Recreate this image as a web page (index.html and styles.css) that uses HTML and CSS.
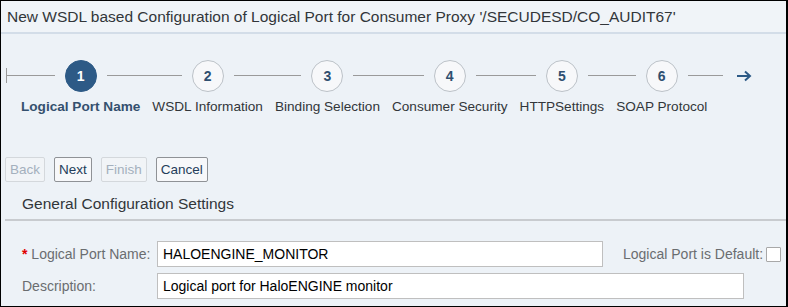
FILE: index.html
```html
<!DOCTYPE html>
<html>
<head>
<meta charset="utf-8">
<link rel="stylesheet" href="styles.css">
</head>
<body>
<div class="frame">
  <div class="titlebar">New WSDL based Configuration of Logical Port for Consumer Proxy '/SECUDESD/CO_AUDIT67'</div>

  <div class="steps">
    <span class="tick"></span>
    <span class="lead"></span>
    <div class="step">
      <div class="track"><span class="line"></span><span class="circle active">1</span><span class="line"></span></div>
      <div class="label active">Logical Port Name</div>
    </div>
    <div class="step">
      <div class="track"><span class="line"></span><span class="circle">2</span><span class="line"></span></div>
      <div class="label">WSDL Information</div>
    </div>
    <div class="step">
      <div class="track"><span class="line"></span><span class="circle">3</span><span class="line"></span></div>
      <div class="label">Binding Selection</div>
    </div>
    <div class="step">
      <div class="track"><span class="line"></span><span class="circle">4</span><span class="line"></span></div>
      <div class="label">Consumer Security</div>
    </div>
    <div class="step">
      <div class="track"><span class="line"></span><span class="circle">5</span><span class="line"></span></div>
      <div class="label">HTTPSettings</div>
    </div>
    <div class="step">
      <div class="track"><span class="line"></span><span class="circle">6</span><span class="line"></span></div>
      <div class="label">SOAP Protocol</div>
    </div>
    <span class="tail"></span>
    <svg class="arrow" width="16" height="12" viewBox="0 0 16 12">
      <path d="M1 6 H14 M9 1.5 L14 6 L9 10.5" fill="none" stroke="#2c5a86" stroke-width="2" stroke-linejoin="miter"/>
    </svg>
  </div>

  <div class="buttons">
    <button class="btn disabled">Back</button>
    <button class="btn">Next</button>
    <button class="btn disabled">Finish</button>
    <button class="btn">Cancel</button>
  </div>

  <div class="section">General Configuration Settings</div>

  <div class="form">
    <div class="row">
      <label class="flabel"><span class="req">*</span> Logical Port Name:</label>
      <div class="input w1">HALOENGINE_MONITOR</div>
      <span class="cblabel">Logical Port is Default:</span>
      <span class="checkbox"></span>
    </div>
    <div class="row">
      <label class="flabel">Description:</label>
      <div class="input w2">Logical port for HaloENGINE monitor</div>
    </div>
  </div>
</div>
</body>
</html>
```

FILE: styles.css
```css
html, body {
  margin: 0;
  padding: 0;
  background: #edf2f7;
}

.frame {
  width: 788px;
  height: 307px;
  box-sizing: border-box;
  border: 1px solid #000;
  border-right-width: 2px;
  background: #edf2f7;
  font-family: "Liberation Sans", Arial, sans-serif;
  color: #32363a;
  overflow: hidden;
}

.titlebar {
  height: 31px;
  line-height: 31px;
  padding-left: 6px;
  font-size: 15.5px;
  color: #32363a;
  background: #f0f4f8;
  border-bottom: 2px solid #d3dde8;
  white-space: nowrap;
}

.steps {
  display: flex;
  align-items: flex-start;
  padding-top: 26px;
  padding-left: 5px;
  height: 90px;
  box-sizing: border-box;
}

.tick {
  width: 1px;
  height: 15px;
  margin-top: 8px;
  background: #9a9a9a;
}

.lead {
  width: 8px;
  height: 1px;
  margin-top: 15px;
  background: #9a9a9a;
}

.tail {
  width: 11px;
  height: 1px;
  margin-top: 15px;
  margin-left: -1px;
  background: #9a9a9a;
}

.arrow {
  margin-left: 13px;
  margin-top: 10px;
}

.step {
  display: flex;
  flex-direction: column;
  align-items: stretch;
}

.track {
  display: flex;
  align-items: flex-start;
  height: 32px;
}

.line {
  flex: 1;
  height: 1px;
  margin-top: 15px;
  background: #9a9a9a;
}

.circle {
  width: 30px;
  height: 30px;
  margin: 0 10px;
  border: 1px solid #bcc2c8;
  border-radius: 50%;
  background: #f7f8fa;
  color: #2f4f70;
  font-weight: bold;
  font-size: 14px;
  display: flex;
  align-items: center;
  justify-content: center;
}

.circle.active {
  background: #2d5a86;
  border-color: #2d5a86;
  color: #fff;
}

.label {
  margin-top: 6px;
  padding: 0 6px;
  font-size: 13.6px;
  line-height: 18px;
  text-align: center;
  white-space: nowrap;
  color: #32363a;
}

.label.active {
  font-weight: bold;
  color: #34506e;
}

.buttons {
  display: flex;
  gap: 9px;
  padding-left: 4px;
  margin-top: 33px;
  height: 25px;
}

.btn {
  height: 25px;
  padding: 0 4px;
  margin: 0;
  font-family: "Liberation Sans", Arial, sans-serif;
  font-size: 13.5px;
  color: #253e5a;
  background: #f7f8fa;
  border: 1px solid #8f9296;
  border-radius: 2px;
}

.btn.disabled {
  color: #a4b0bd;
  border-color: #d4d8dc;
  background: #f1f4f7;
}

.section {
  margin-top: 8px;
  margin-left: 4px;
  padding-left: 17px;
  padding-bottom: 1px;
  height: 28px;
  line-height: 28px;
  font-size: 15.5px;
  color: #32363a;
  border-bottom: 2px solid #c8cbcf;
}

.form {
  padding-top: 20px;
  display: flex;
  flex-direction: column;
  gap: 6px;
}

.row {
  display: flex;
  align-items: center;
  height: 26px;
}

.flabel {
  width: 135px;
  padding-left: 21px;
  font-size: 14px;
  color: #6a6d70;
  white-space: nowrap;
}

.req {
  color: #e00000;
  font-weight: bold;
}

.input {
  height: 24px;
  line-height: 24px;
  box-sizing: content-box;
  border: 1px solid #bfbfbf;
  background: #fff;
  padding-left: 5px;
  font-size: 14px;
  color: #000;
  white-space: nowrap;
}

.w1 { width: 439px; }
.w2 { width: 580px; }

.cblabel {
  margin-left: 20px;
  font-size: 14px;
  color: #6a6d70;
  white-space: nowrap;
}

.checkbox {
  width: 13px;
  height: 13px;
  margin-left: 3px;
  border: 1px solid #a8a8a8;
  background: #fff;
  border-radius: 1px;
}
```
